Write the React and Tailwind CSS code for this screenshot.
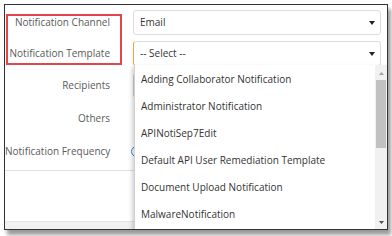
import React from 'react'

const templates = [
  'Adding Collaborator Notification',
  'Administrator Notification',
  'APINotiSep7Edit',
  'Default API User Remediation Template',
  'Document Upload Notification',
  'MalwareNotification'
]

const Caret = () => (
  <svg width="6" height="4" viewBox="0 0 6 4" className="mr-[2px]">
    <path d="M0 0h6L3 4z" fill="#222" />
  </svg>
)

const Row = ({ label, mt, children }) => (
  <div className={`flex items-center h-[25px] ${mt}`}>
    <div className="w-[105px] text-right text-[10px] text-[#5a5a5a] whitespace-nowrap">{label}</div>
    <div className="ml-[23px]">{children}</div>
  </div>
)

const App = () => {
  return (
    <div
      className="w-[392px] h-[236px] bg-white pt-[4px] pl-[4px]"
      style={{ fontFamily: '"Open Sans", "Noto Sans", sans-serif' }}
    >
      <div className="relative w-[384px] h-[226px] border border-[#333] bg-white shadow-[3px_5px_4px_rgba(0,0,0,0.4)] overflow-hidden">
        {/* Form */}
        <div className="pt-[5px]">
          <Row label="Notification Channel" mt="">
            <div className="w-[248px] h-[25px] border border-[#dcdcdc] rounded-[3px] flex items-center justify-between pl-[6px] pr-[3px] text-[10px] text-[#333]">
              <span>Email</span>
              <Caret />
            </div>
          </Row>
          <Row label="Notification Template" mt="mt-[6px]">
            <div className="w-[248px] h-[25px] border border-[#dcdcdc] border-l-[#f0a23c] rounded-[3px] flex items-center justify-between pl-[6px] pr-[3px] text-[10px] text-[#333]">
              <span>-- Select --</span>
              <Caret />
            </div>
          </Row>
          <Row label="Recipients" mt="mt-[7px]">
            <div className="w-[248px] h-[25px] border border-[#cfcfcf] rounded-[3px]" />
          </Row>
          <Row label="Others" mt="mt-[8px]">
            <div className="w-[248px] h-[25px]" />
          </Row>
          <Row label="Notification Frequency" mt="mt-[8px]">
            <div className="w-[11px] h-[11px] rounded-full border border-[#3b7dd8] ml-[-2px]" />
          </Row>
          <div className="mt-[6px] h-px bg-[#d8e1ea]" />
        </div>

        {/* Bottom band */}
        <div className="absolute left-0 right-0 bottom-0 h-[8px] bg-[#f1f1f1] border-t border-[#e6e6e6]" />

        {/* Annotation */}
        <div className="absolute left-[1px] top-[9px] w-[116px] h-[51px] border-2 border-[#e2454c]" />

        {/* Dropdown list */}
        <div className="absolute left-[129px] top-[60px] right-0 bottom-0 bg-white border-l border-[#d0d0d0] shadow-[-2px_2px_4px_rgba(0,0,0,0.18)] flex">
          <div className="flex-1 pt-[1px]">
            {templates.map((t) => (
              <div key={t} className="h-[27px] flex items-center pl-[6px] text-[10px] text-[#333] whitespace-nowrap">
                {t}
              </div>
            ))}
          </div>
          <div className="w-[12px] bg-[#f1f1f1] flex flex-col items-center">
            <svg width="5" height="3" viewBox="0 0 5 3" className="mt-[7px]">
              <path d="M0 3h5L2.5 0z" fill="#a3a3a3" />
            </svg>
            <div className="w-[10px] h-[68px] bg-[#c1c1c1] mt-[5px]" />
            <div className="flex-1" />
            <svg width="5" height="3" viewBox="0 0 5 3" className="mb-[5px]">
              <path d="M0 0h5L2.5 3z" fill="#505050" />
            </svg>
          </div>
        </div>
      </div>
    </div>
  )
}

export default App
